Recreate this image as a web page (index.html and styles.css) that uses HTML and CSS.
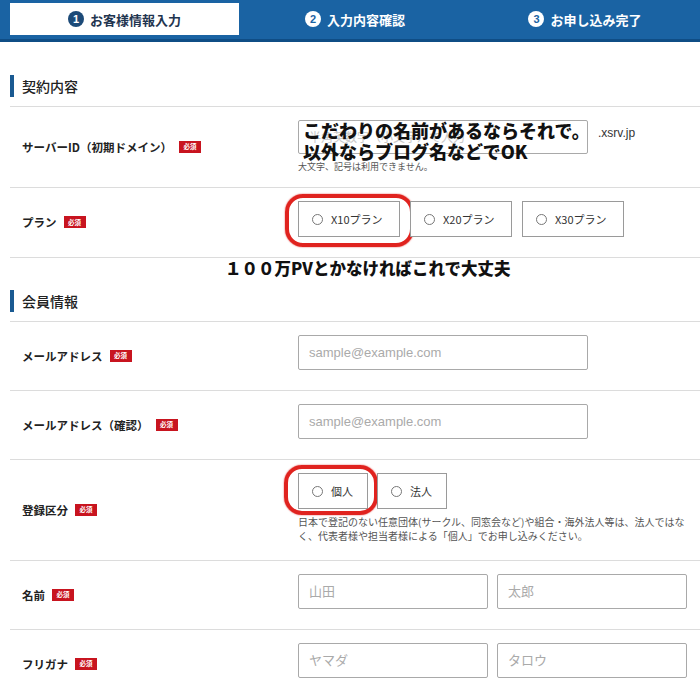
FILE: index.html
```html
<!DOCTYPE html>
<html lang="ja">
<head>
<meta charset="utf-8">
<title>お客様情報入力</title>
<link rel="stylesheet" href="styles.css">
</head>
<body>
<header class="steps">
  <div class="step active"><span class="num">1</span><span>お客様情報入力</span></div>
  <div class="step"><span class="num">2</span><span>入力内容確認</span></div>
  <div class="step"><span class="num">3</span><span>お申し込み完了</span></div>
</header>

<main class="form">
  <section class="section">
    <h2 class="heading">契約内容</h2>
    <div class="row">
      <div class="label">サーバーID（初期ドメイン）<span class="req">必須</span></div>
      <div class="control">
        <div class="inline">
          <div class="input-wrap">
            <input class="input w290" type="text" placeholder="半角英数字（小文字）で入力">
            <div class="note note-a">こだわりの名前があるならそれで。<br>以外ならブログ名などでOK</div>
          </div>
          <span class="suffix">.xsrv.jp</span>
        </div>
        <p class="hint">大文字、記号は利用できません。</p>
      </div>
    </div>
    <div class="row plan-row">
      <div class="label">プラン<span class="req">必須</span></div>
      <div class="control">
        <div class="radios plans">
          <label class="radio"><span class="dot"></span>X10プラン<span class="mark mark-plan"></span></label>
          <label class="radio"><span class="dot"></span>X20プラン</label>
          <label class="radio"><span class="dot"></span>X30プラン</label>
        </div>
      </div>
      <div class="note note-b">１００万PVとかなければこれで大丈夫</div>
    </div>
  </section>

  <section class="section">
    <h2 class="heading">会員情報</h2>
    <div class="row">
      <div class="label">メールアドレス<span class="req">必須</span></div>
      <div class="control">
        <input class="input w290" type="text" placeholder="sample@example.com">
      </div>
    </div>
    <div class="row">
      <div class="label">メールアドレス（確認）<span class="req">必須</span></div>
      <div class="control">
        <input class="input w290" type="text" placeholder="sample@example.com">
      </div>
    </div>
    <div class="row">
      <div class="label">登録区分<span class="req">必須</span></div>
      <div class="control">
        <div class="radios">
          <label class="radio"><span class="dot"></span>個人<span class="mark mark-kojin"></span></label>
          <label class="radio"><span class="dot"></span>法人</label>
        </div>
        <p class="hint hint-wide">日本で登記のない任意団体(サークル、同窓会など)や組合・海外法人等は、法人ではなく、代表者様や担当者様による「個人」でお申し込みください。</p>
      </div>
    </div>
    <div class="row">
      <div class="label">名前<span class="req">必須</span></div>
      <div class="control">
        <div class="pair">
          <input class="input" type="text" placeholder="山田">
          <input class="input" type="text" placeholder="太郎">
        </div>
      </div>
    </div>
    <div class="row">
      <div class="label">フリガナ<span class="req">必須</span></div>
      <div class="control">
        <div class="pair">
          <input class="input" type="text" placeholder="ヤマダ">
          <input class="input" type="text" placeholder="タロウ">
        </div>
      </div>
    </div>
  </section>
</main>
</body>
</html>
```

FILE: styles.css
```css
* { box-sizing: border-box; }
html, body { margin: 0; padding: 0; background: #fff; }
body {
  font-family: "Noto Sans CJK JP", "Liberation Sans", sans-serif;
  color: #222;
  width: 700px;
  overflow: hidden;
}

.steps {
  display: flex;
  background: #1a63a3;
  border-bottom: 3px solid #0f4d85;
  padding: 3px 0 4px 10px;
  height: 42px;
}
.step {
  width: 230px;
  height: 32px;
  display: flex;
  align-items: center;
  justify-content: center;
  gap: 6px;
  color: #fff;
  font-size: 13px;
  font-weight: 700;
}
.step.active {
  background: #fff;
  color: #1f3550;
  width: 229px;
  margin-right: 1px;
}
.num {
  width: 16px;
  height: 16px;
  border-radius: 50%;
  background: #fff;
  color: #1a63a3;
  font-size: 11px;
  font-weight: 700;
  display: flex;
  align-items: center;
  justify-content: center;
  font-family: "Liberation Sans", sans-serif;
}
.step.active .num { background: #1c4a78; color: #fff; }

.form { padding-left: 10px; }
.section { margin-top: 33px; }
.section + .section { margin-top: 32px; }

.heading {
  margin: 0 0 10px;
  font-size: 14px;
  font-weight: 500;
  color: #222;
  border-left: 4px solid #1a5a92;
  padding-left: 8px;
  height: 22px;
  line-height: 22px;
  position: relative;
}
.heading::after {
  content: "";
  position: absolute;
  left: -4px;
  right: 0;
  bottom: -10px;
  border-bottom: 1px solid #dcdcdc;
}

.row {
  display: flex;
  align-items: center;
  border-bottom: 1px solid #dcdcdc;
  padding: 13px 0 14px 12px;
  position: relative;
}
.label {
  width: 276px;
  flex: none;
  font-size: 11.5px;
  font-weight: 700;
  color: #222;
  display: flex;
  align-items: center;
}
.req {
  display: inline-flex;
  align-items: center;
  justify-content: center;
  width: 22px;
  height: 12px;
  background: #c8141f;
  color: #fff;
  font-size: 6.5px;
  font-weight: 700;
  margin-left: 7px;
  line-height: 1;
}

.control { flex: none; width: 392px; }
.control > .input, .pair, .radios { margin-bottom: 6px; }

.inline { display: flex; align-items: center; }
.input-wrap { position: relative; }
.input {
  display: block;
  height: 35px;
  border: 1px solid #a9a9a9;
  border-radius: 2px;
  padding: 0 10px;
  font-family: "Liberation Sans", "Noto Sans CJK JP", sans-serif;
  font-size: 13px;
  color: #333;
  background: #fff;
  outline: none;
}
.input::placeholder { color: #aaa; }
.w290 { width: 290px; }
.input-wrap .input { height: 34px; }
.input-wrap .input::placeholder { color: #c8c8c8; font-size: 12px; }
.suffix {
  margin-left: 10px;
  font-size: 12px;
  color: #333;
  font-family: "Liberation Sans", sans-serif;
  margin-top: -8px;
}

.hint {
  margin: 6px 0 0;
  font-size: 9px;
  line-height: 13px;
  color: #555;
}
.hint-wide {
  font-size: 10px;
  line-height: 14px;
  max-width: 389px;
  margin: 6px 0 3px;
}

.pair { display: flex; gap: 9px; }
.pair .input { width: 190px; }

.radios { display: flex; gap: 9px; }
.plans { gap: 10px; }
.radio {
  position: relative;
  display: flex;
  align-items: center;
  gap: 8px;
  height: 36px;
  padding: 0 14px 0 13px;
  border: 1px solid #9a9a9a;
  font-size: 11px;
  color: #333;
  background: #fff;
}
.plans .radio { width: 102px; }
.dot {
  width: 11px;
  height: 11px;
  border: 1px solid #777;
  border-radius: 50%;
  flex: none;
}

.mark {
  position: absolute;
  border: 4px solid #e0231f;
  border-radius: 18px;
  box-shadow: 0 0 1.5px #e0231f;
  pointer-events: none;
}
.mark-plan { left: -14px; top: -8px; width: 129px; height: 53px; }
.mark-kojin { left: -15px; top: -9px; width: 94px; height: 50px; }

.note {
  position: absolute;
  font-weight: 900;
  color: #111;
  white-space: nowrap;
}
.note-a {
  left: 5px;
  top: 0;
  font-size: 18px;
  line-height: 21px;
}
.note-b {
  left: 215px;
  top: calc(100% + 1px);
  font-size: 16.5px;
  line-height: 20px;
}
```
